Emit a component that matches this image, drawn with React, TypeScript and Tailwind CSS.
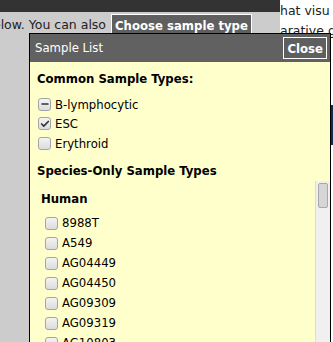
import { Check, Minus } from 'lucide-react'

type BoxState = 'on' | 'off' | 'mixed'

const COMMON_TYPES: { label: string; state: BoxState }[] = [
  { label: 'B-lymphocytic', state: 'mixed' },
  { label: 'ESC', state: 'on' },
  { label: 'Erythroid', state: 'off' },
]

const HUMAN_TYPES = ['8988T', 'A549', 'AG04449', 'AG04450', 'AG09309', 'AG09319', 'AG10803', 'AG04451']

function Box({ state }: { state: BoxState }) {
  return (
    <span className="flex h-[13px] w-[13px] shrink-0 items-center justify-center rounded-[3px] border border-[#a4a4a4] bg-gradient-to-b from-[#f4f4f4] to-[#dcdcdc]">
      {state === 'on' && <Check size={10} strokeWidth={4} className="text-[#333]" />}
      {state === 'mixed' && <Minus size={10} strokeWidth={4} className="text-[#333]" />}
    </span>
  )
}

export default function App() {
  return (
    <div className="relative h-[342px] w-[333px] overflow-hidden font-['DejaVu_Sans_Condensed','DejaVu_Sans',sans-serif] text-[13px] text-black [font-stretch:condensed]">
      {/* page behind the dialog */}
      <div className="flex h-full">
        <div className="flex w-[284px] flex-col bg-[#cccccc]">
          <div className="h-[12px] w-[280px] bg-[#333333]" />
          <div className="mt-[2px] flex items-center whitespace-nowrap">
            <span className="ml-[-15px] font-['DejaVu_Sans',sans-serif] text-[12.5px] text-[#222] [font-stretch:normal]">
              below. You can also
            </span>
            <span className="ml-[5px] border border-white bg-[#5f5f5f] px-[3px] py-[1px] font-bold text-white">
              Choose sample type
            </span>
          </div>
        </div>
        <div className="flex flex-1 flex-col bg-white">
          <div className="whitespace-nowrap pt-[1px] font-['DejaVu_Sans',sans-serif] text-[12.5px] leading-[20px] text-[#222] [font-stretch:normal]">
            <div>hat visu</div>
            <div>arative g</div>
            <div>e</div>
          </div>
          <div className="mt-[44px] h-[40px] bg-[#0b2f55]" />
        </div>
      </div>

      {/* floating sample list dialog */}
      <div className="absolute left-[29px] top-[33px] flex h-[320px] w-[302px] flex-col border border-black bg-[#ffffcc]">
        <div className="flex h-[28px] items-center justify-between bg-[#616161] pl-[5px] pr-[3px]">
          <span className="text-white">Sample List</span>
          <button
            type="button"
            className="h-[22px] border border-white bg-[#5f5f5f] px-[3px] font-bold leading-none text-white"
          >
            Close
          </button>
        </div>

        <div className="flex min-h-0 flex-1 flex-col">
          <div className="px-[7px] pt-[7px]">
            <div className="font-bold">Common Sample Types:</div>
            <div className="mt-[6px] flex flex-col">
              {COMMON_TYPES.map((t) => (
                <label key={t.label} className="flex h-[19.5px] items-center gap-[4px] pl-[1px]">
                  <Box state={t.state} />
                  <span>{t.label}</span>
                </label>
              ))}
            </div>
            <div className="mt-[8px] font-bold">Species-Only Sample Types</div>
          </div>

          <div className="flex min-h-0 flex-1">
            <div className="flex-1 overflow-hidden pl-[11px] pt-[8px]">
              <div className="font-bold">Human</div>
              <div className="mt-[5px] flex flex-col">
                {HUMAN_TYPES.map((name) => (
                  <label key={name} className="flex h-[20px] items-center gap-[4px] pl-[4px]">
                    <Box state="off" />
                    <span>{name}</span>
                  </label>
                ))}
              </div>
            </div>
            <div className="w-[15px] border-l border-[#dcdcdc] bg-[#f0f0f0] px-[2px] pt-[2px]">
              <div className="h-[25px] rounded-[2px] border border-[#a8a8a8] bg-[#d6d6d6]" />
            </div>
          </div>
        </div>
      </div>
    </div>
  )
}
